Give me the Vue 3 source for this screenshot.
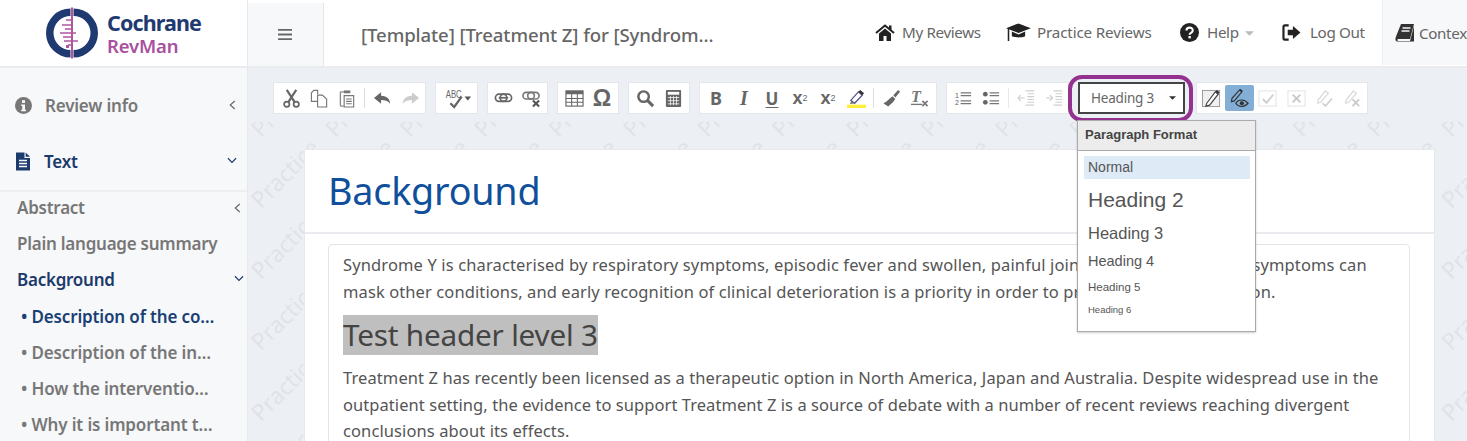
<script setup>
const sideSubs = [
  { t: 'Description of the co…', on: true },
  { t: 'Description of the in…', on: false },
  { t: 'How the interventio…', on: false },
  { t: 'Why it is important t…', on: false }
]
</script>

<template>
  <div class="app">
    <aside class="side">
      <div class="logo">
        <svg class="mark" viewBox="0 0 52 52" width="52" height="52">
          <path d="M24.5 1.5A24.5 24.5 0 0 0 24.5 50.5V43A17 17 0 0 1 24.5 9Z" fill="#1f3a70"/>
          <path d="M27.5 1.5A24.5 24.5 0 0 1 27.5 50.5V43A17 17 0 0 0 27.5 9Z" fill="#1f3a70"/>
          <rect x="25" y="0.5" width="2" height="51" fill="#b0569f"/>
          <path d="M20 13h6M16 18h10M19 22h7M14 26h16M17 30h9M18 34h14M22 38h4" stroke="#b0569f" stroke-width="1.4" fill="none"/>
          <rect x="20" y="38" width="3" height="3" fill="#b0569f"/>
        </svg>
        <div class="brand">
          <div class="b1">Cochrane</div>
          <div class="b2">RevMan</div>
        </div>
      </div>
      <div class="menu-row grey first">
        <svg class="mi" viewBox="0 0 16 16" width="17" height="17"><circle cx="8" cy="8" r="8" fill="#777"/><rect x="6.6" y="3" width="2.8" height="2.6" fill="#f7f8fa"/><path d="M5.8 7h3.6v5h1v1.5H5.8V12h1V8.4h-1Z" fill="#f7f8fa"/></svg>
        <span>Review info</span>
        <svg class="chev" viewBox="0 0 10 12" width="9" height="12"><path d="M7.5 1.5 2.5 6l5 4.500" fill="none" stroke="#666" stroke-width="1.3"/></svg>
      </div>
      <div class="menu-row navy second">
        <svg class="mi" viewBox="0 0 16 18" width="16" height="19"><path d="M1 0h8.500v5.500H15V18H1Z" fill="#1c3a6b"/><path d="M10.700 0 15 4.300h-4.300Z" fill="#1c3a6b"/><path d="M4 8h8M4 11h8M4 14h8" stroke="#f7f8fa" stroke-width="1.400"/></svg>
        <span>Text</span>
        <svg class="chev down" viewBox="0 0 12 10" width="12" height="9"><path d="M1.500 2.500 6 7l4.500-4.500" fill="none" stroke="#1c3a6b" stroke-width="1.300"/></svg>
      </div>
      <div class="tree">
        <div class="tree-row grey">Abstract
          <svg class="tchev" viewBox="0 0 10 12" width="9" height="12"><path d="M7.500 1.500 2.500 6l5 4.500" fill="none" stroke="#666" stroke-width="1.300"/></svg>
        </div>
        <div class="tree-row grey">Plain language summary</div>
        <div class="tree-row navy">Background
          <svg class="tchev" viewBox="0 0 12 10" width="12" height="9"><path d="M1.500 2.500 6 7l4.500-4.500" fill="none" stroke="#1c3a6b" stroke-width="1.300"/></svg>
        </div>
        <div v-for="s in sideSubs" :key="s.t" class="tree-row sub" :class="s.on ? 'navy2' : 'grey'">• {{ s.t }}</div>
      </div>
    </aside>

    <div class="right">
      <header class="top">
        <div class="burger">
          <svg viewBox="0 0 16 14" width="15" height="13"><path d="M0 2h15M0 7h15M0 12h15" stroke="#666" stroke-width="2"/></svg>
        </div>
        <div class="title">[Template] [Treatment Z] for [Syndrom…</div>
        <nav class="nav">
          <a class="n1">
            <svg viewBox="0 0 20 17" width="20" height="17"><path d="M4 9.500 10 4.500l6 5V17h-4.500v-5h-3v5H4Z" fill="#222"/><path d="M1 9 10 1.500 19 9" fill="none" stroke="#222" stroke-width="2"/><rect x="14" y="1.500" width="2.500" height="4.500" fill="#222"/></svg>
            My Reviews
          </a>
          <a class="n2">
            <svg viewBox="0 0 26 21" width="25" height="20"><path d="M13 1.500 26 6.500 13 11.500 0 6.500Z" fill="#222"/><path d="M6 10v4.500c0 2.300 14 2.300 14 0V10l-7 3Z" fill="#222"/><path d="M2.500 7v13" stroke="#222" stroke-width="1.600"/></svg>
            Practice Reviews
          </a>
          <a class="n3">
            <svg viewBox="0 0 20 20" width="19" height="19"><circle cx="10" cy="10" r="10" fill="#222"/><path d="M6.800 8c0-4.200 6.600-4.200 6.600-.2 0 2.500-3.300 2.500-3.300 4.500" fill="none" stroke="#fff" stroke-width="2.200"/><rect x="8.900" y="13.700" width="2.500" height="2.500" fill="#fff"/></svg>
            Help
            <svg class="caret" viewBox="0 0 10 5" width="9" height="5"><path d="M0 0h10L5 5Z" fill="#bbb"/></svg>
          </a>
          <a class="n4">
            <svg viewBox="0 0 20 18" width="19" height="17"><path d="M7 1.500H3C1.800 1.500 1.500 2.300 1.500 3v12c0 .8.400 1.500 1.500 1.500h4" fill="none" stroke="#222" stroke-width="2.300"/><path d="M11.500 2 19.500 9l-8 7v-4H6V6h5.500Z" fill="#222"/></svg>
            Log Out
          </a>
          <a class="n5">
            <svg viewBox="0 0 20 20" width="20" height="20"><path d="M6 1h13l-4 15H3.500c-1.500 0-1.500 2 0 2H15l4-15v15.500H3C.5 18.500 0 16.500.8 14Z" fill="#333"/><path d="M7.500 5h8M6.500 8h8" stroke="#f7f8fa" stroke-width="1.300"/></svg>
            Context and evidence
          </a>
        </nav>
      </header>

      <main class="main">
        <svg class="mark-layer" width="1219" height="373" aria-hidden="true">
          <defs>
            <pattern id="wm" x="0" y="1" width="74.400" height="71" patternUnits="userSpaceOnUse">
              <text transform="translate(13 69.500) rotate(-45)" class="wm-text">Practice</text>
            </pattern>
          </defs>
          <rect width="1219" height="373" fill="url(#wm)"/>
        </svg>

        <div class="bar">
          <div class="grp g1">
            <button class="tb"><svg viewBox="0 0 20 20"><circle cx="5" cy="16" r="2.800" fill="none" stroke="#666" stroke-width="1.800"/><circle cx="15" cy="16" r="2.800" fill="none" stroke="#666" stroke-width="1.800"/><path d="M6.500 14 15 1M13.500 14 5 1" stroke="#666" stroke-width="2.300"/></svg></button>
            <button class="tb"><svg viewBox="0 0 20 20"><path d="M8 5.500 8 1.500H4L1.500 4v9H8" fill="none" stroke="#777" stroke-width="1.200"/><path d="M8 6.500h5l4.500 4V19H8Z" fill="#fff" stroke="#777" stroke-width="1.200"/></svg></button>
            <button class="tb"><svg viewBox="0 0 20 20"><path d="M6 3H3.500Q2.500 3 2.500 4v13q0 1 1 1H6" fill="none" stroke="#888" stroke-width="1.400"/><path d="M6 1.500h7v3H6Z" fill="#777"/><path d="M6.500 7h10v12h-10Z" fill="#fff" stroke="#777" stroke-width="1.200"/><path d="M8.500 10.500h6M8.500 13h6M8.500 15.500h6" stroke="#777" stroke-width="1.200"/></svg></button>
            <i class="sep"></i>
            <button class="tb"><svg viewBox="0 0 20 20"><path d="M8.500 3.500 1 9.500l7.500 6v-3.800c4 0 7 .6 9.500 3.800 0-5-3-8-9.500-8.500Z" fill="#666"/></svg></button>
            <button class="tb"><svg viewBox="0 0 20 20"><path d="M11.500 3.500 19 9.500l-7.500 6v-3.800c-4 0-7 .6-9.500 3.800 0-5 3-8 9.500-8.500Z" fill="#ccc"/></svg></button>
          </div>
          <div class="grp g2">
            <button class="tb wide">
              <svg viewBox="0 0 34 24" class="wide-svg"><text transform="translate(5 11) scale(.75 1)" class="abc">ABC</text><path d="M10 17 14 21 22 10" fill="none" stroke="#666" stroke-width="2.400"/><path d="M25 10h7l-3.500 4Z" fill="#555"/></svg>
            </button>
          </div>
          <div class="grp g3">
            <button class="tb"><svg viewBox="0 0 20 20"><rect x="1.500" y="5.500" width="12" height="7.500" rx="3.700" fill="none" stroke="#666" stroke-width="1.800"/><rect x="6.500" y="5.500" width="12" height="7.500" rx="3.700" fill="none" stroke="#666" stroke-width="1.800"/><path d="M5 9.250h10" stroke="#666" stroke-width="1.800"/></svg></button>
            <button class="tb"><svg viewBox="0 0 20 20"><rect x="1" y="3.500" width="12" height="7" rx="3.500" fill="none" stroke="#777" stroke-width="1.700"/><rect x="6" y="3.500" width="12" height="7" rx="3.500" fill="none" stroke="#777" stroke-width="1.700"/><path d="M11.500 12l6.500 6.500M18 12l-6.500 6.500" stroke="#555" stroke-width="2.200"/></svg></button>
          </div>
          <div class="grp g4">
            <button class="tb"><svg viewBox="0 0 20 20"><rect x="1" y="2" width="18" height="16" fill="#fff" stroke="#666" stroke-width="1.200"/><rect x="1" y="2" width="18" height="3.500" fill="#666"/><path d="M1 10h18M1 14h18M7 5v13M13 5v13" stroke="#666" stroke-width="1.100"/></svg></button>
            <button class="tb glyph omega">Ω</button>
          </div>
          <div class="grp g5">
            <button class="tb"><svg viewBox="0 0 20 20"><circle cx="8" cy="8" r="5.500" fill="none" stroke="#666" stroke-width="2.600"/><path d="M12 12l6 6" stroke="#666" stroke-width="3.200"/></svg></button>
            <button class="tb"><svg viewBox="0 0 20 20"><rect x="2" y="1" width="16" height="18" rx="1" fill="#666"/><rect x="4" y="3" width="12" height="3" fill="#fff"/><path d="M4 9h12M4 12.300h12M4 15.600h12" stroke="#fff" stroke-width=".8" fill="none"/><path d="M6.800 7.500v9.500M10 7.500v9.500M13.200 7.500v9.500" stroke="#fff" stroke-width=".8"/></svg></button>
          </div>
          <div class="grp g6">
            <button class="tb glyph fb">B</button>
            <button class="tb glyph fi">I</button>
            <button class="tb glyph fu">U</button>
            <button class="tb glyph fx">x<sub>2</sub></button>
            <button class="tb glyph fx">x<sup>2</sup></button>
            <button class="tb"><svg viewBox="0 0 20 20"><path d="M4 12 12 3l4 3.500-8 8.500Z" fill="#fff" stroke="#5a5a8a" stroke-width="1.400"/><path d="M12 3l2-2 4 3.500-2 2Z" fill="#333"/><path d="M4.500 12.500 8 15l-5 1Z" fill="#777"/><rect x="0" y="16.500" width="20" height="3.500" fill="#ffef3a"/></svg></button>
            <i class="sep"></i>
            <button class="tb"><svg viewBox="0 0 20 20"><path d="M12 6.500 17 1l2 2-5 6Z" fill="#666"/><path d="M11 7.500 14 10.500 11.500 14l-5 4.500-5-3.500c3.500-1.500 6-5 9.500-7.500Z" fill="#666"/></svg></button>
            <button class="tb"><svg viewBox="0 0 20 20"><text x="1" y="14" class="tx">T</text><rect x="1" y="15.500" width="12" height="1.400" fill="#777"/><path d="M13 12.500l5.500 5.500M18.500 12.500 13 18" stroke="#777" stroke-width="1.700"/></svg></button>
          </div>
          <div class="grp g7">
            <button class="tb"><svg viewBox="0 0 20 20"><text x="1" y="9" class="num">1</text><text x="1" y="17" class="num">2</text><path d="M7 4h11M7 7h11M7 12.500h11M7 15.500h11" stroke="#777" stroke-width="1.300"/></svg></button>
            <button class="tb"><svg viewBox="0 0 20 20"><circle cx="3.500" cy="5.500" r="2.500" fill="#666"/><circle cx="3.500" cy="14" r="2.500" fill="#666"/><path d="M8 4h10M8 7h10M8 12.500h10M8 15.500h10" stroke="#777" stroke-width="1.300"/></svg></button>
            <i class="sep pale"></i>
            <button class="tb"><svg viewBox="0 0 20 20"><path d="M9 2h9M11 5h7M11 8h7M11 11h7M11 14h7M9 17h9" stroke="#cfcfcf" stroke-width="1.200"/><path d="M1 9.500h7M4 6.500 1 9.500l3 3" fill="none" stroke="#cfcfcf" stroke-width="1.200"/></svg></button>
            <button class="tb"><svg viewBox="0 0 20 20"><path d="M9 2h9M11 5h7M11 8h7M11 11h7M11 14h7M9 17h9" stroke="#cfcfcf" stroke-width="1.200"/><path d="M1 9.500h7M5 6.500l3 3-3 3" fill="none" stroke="#cfcfcf" stroke-width="1.200"/></svg></button>
          </div>
          <div class="combo">
            <span>Heading 3</span>
            <svg viewBox="0 0 10 5" width="7" height="4"><path d="M0 0h10L5 5Z" fill="#333"/></svg>
          </div>
          <div class="grp g8">
            <button class="tc"><svg viewBox="0 0 20 20"><rect x=".5" y="1.500" width="18" height="17" fill="#f0f0f0" stroke="#999"/><path d="M5 15 14 3l3 2.500L8 17l-4 1Z" fill="#fff" stroke="#444" stroke-width="1.200"/><path d="M14 3l1.500-2 3 2.500-1.500 2Z" fill="#333"/></svg></button>
            <button class="tc active"><svg viewBox="0 0 20 20"><path d="M2 10 10 1l2.500 2-8 9.500-3 .8Z" fill="#83aed6" stroke="#333" stroke-width="1.200"/><path d="M10 1l1-1 2.500 2-1 1Z" fill="#222"/><path d="M6 15c3-4.500 9-4.500 13 0-4 4.500-10 4.500-13 0Z" fill="#83aed6" stroke="#333" stroke-width="1.200"/><circle cx="12.500" cy="15" r="2.200" fill="#333"/></svg></button>
            <button class="tc"><svg viewBox="0 0 20 20"><rect x="1" y="2" width="18" height="16" fill="none" stroke="#e2e2e2"/><path d="M5 10.500 9 14.500 16 6" fill="none" stroke="#cfcfcf" stroke-width="2"/></svg></button>
            <button class="tc"><svg viewBox="0 0 20 20"><rect x="1" y="2" width="18" height="16" fill="none" stroke="#e2e2e2"/><path d="M6 6l8 8M14 6l-8 8" stroke="#c9c9c9" stroke-width="2"/></svg></button>
            <button class="tc"><svg viewBox="0 0 20 20"><path d="M3 12 11 2l3 2.500L6 14l-3 1Z" fill="none" stroke="#d6d6d6" stroke-width="1.200"/><path d="M8 15l3 3 7-8" fill="none" stroke="#cfcfcf" stroke-width="1.800"/></svg></button>
            <button class="tc"><svg viewBox="0 0 20 20"><path d="M3 12 11 2l3 2.500L6 14l-3 1Z" fill="none" stroke="#d6d6d6" stroke-width="1.200"/><path d="M10 11l7 7M17 11l-7 7" stroke="#c9c9c9" stroke-width="1.800"/></svg></button>
          </div>
        </div>

        <section class="card">
          <h1 class="h">Background</h1>
          <div class="body">
            <div class="editor">
              <p class="ln l1">Syndrome Y is characterised by respiratory symptoms, episodic fever and swollen, painful joints. These non-specific symptoms can</p>
              <p class="ln l2">mask other conditions, and early recognition of clinical deterioration is a priority in order to prevent organ dysfunction.</p>
              <h3 class="h3"><span>Test header level 3</span></h3>
              <p class="ln l3">Treatment Z has recently been licensed as a therapeutic option in North America, Japan and Australia. Despite widespread use in the</p>
              <p class="ln l4">outpatient setting, the evidence to support Treatment Z is a source of debate with a number of recent reviews reaching divergent</p>
              <p class="ln l5">conclusions about its effects.</p>
            </div>
          </div>
        </section>

        <div class="ring"></div>
        <div class="drop">
          <div class="drop-h">Paragraph Format</div>
          <div class="drop-list">
            <div class="it normal">Normal</div>
            <div class="it i2">Heading 2</div>
            <div class="it i3">Heading 3</div>
            <div class="it i4">Heading 4</div>
            <div class="it i5">Heading 5</div>
            <div class="it i6">Heading 6</div>
          </div>
        </div>
      </main>
    </div>
  </div>
</template>

<style>
html, body { margin: 0; padding: 0; background: #fff; }
</style>

<style scoped>
.app {
  width: 1467px; height: 441px; overflow: hidden; display: flex;
  font-family: "Noto Sans", "Open Sans", sans-serif; color: #555;
}
.side { width: 247px; flex: none; background: #f7f8fa; }
.logo {
  height: 68px; box-sizing: border-box; background: #fff; border-bottom: 2px solid #e9ebee;
  display: flex; align-items: center; padding-left: 46px; gap: 9px;
}
.mark { margin-top: -1px; }
.brand { line-height: 1; margin-top: 2px; }
.b1 { font-size: 21.500px; font-weight: 700; color: #1f3a70; letter-spacing: -.9px; line-height: 24px; }
.b2 { font-size: 18.500px; font-weight: 600; color: #a8509f; line-height: 22px; letter-spacing: -.15px; }
.menu-row {
  display: flex; align-items: center; height: 56px; padding-left: 15px; font-size: 17px; font-weight: 600;
  letter-spacing: -.2px; position: relative;
}
.menu-row .mi { flex: none; margin-right: 13px; }
.menu-row.first { margin-top: 9px; }
.chev { position: absolute; left: 228px; top: 22px; }
.chev.down { top: 23px; left: 226px; }
.grey { color: #777; }
.navy { color: #1c3a6b; }
.navy2 { color: #1a3f74; }
.tree { border-top: 2px solid #eceef1; margin-top: 1px; padding-top: 0; }
.tree-row {
  height: 36.200px; line-height: 31px; padding-left: 17px; font-size: 17px; font-weight: 600;
  letter-spacing: -.25px; position: relative; white-space: nowrap;
}
.tree-row.sub { padding-left: 21px; letter-spacing: -.15px; }
.tchev { position: absolute; left: 233px; top: 10px; }

.right { flex: 1; min-width: 0; display: flex; flex-direction: column; border-left: 1px solid #e6e8ec; }
.top { height: 68px; flex: none; box-sizing: border-box; display: flex; background: #fff; border-bottom: 2px solid #e9ebee; padding-top: 3px; }
.burger {
  width: 76px; flex: none; background: #f7f8fa; border-right: 1px solid #e3e5e9; display: flex; align-items: center; justify-content: center; box-sizing: border-box;
}
.title { width: 551px; flex: none; padding-left: 37px; box-sizing: border-box; font-size: 18.600px; line-height: 64px; color: #666; letter-spacing: -.1px; white-space: nowrap; font-weight: 500; }
.nav { display: flex; flex: 1; font-size: 15.200px; color: #666; letter-spacing: -.35px; min-width: 0; }
.nav a { display: flex; align-items: center; white-space: nowrap; height: 60px; margin-top: -1px; box-sizing: border-box; flex: none; }
.nav svg { flex: none; margin-right: 7px; }
.n1 { width: 131px; }
.n2 { width: 174px; letter-spacing: -.15px; }
.n2 svg { margin-right: 6px; }
.n3 { width: 102px; }
.n3 svg { margin-right: 8px; }
.n3 .caret { margin: 2px 0 0 6px; }
.n4 { width: 100px; }
.n4 svg { margin-right: 9px; }
.n5 { background: #f7f8fa; padding-left: 12px; height: 65px !important; border-left: 1px solid #eceef1; margin-top: -3px !important; }
.n5 svg { margin-right: 4px; }

.main { flex: 1; background: #eceff4; position: relative; min-height: 0; }
.mark-layer { position: absolute; left: 0; top: 0; }
.wm-text { font-family: "Noto Sans", sans-serif; font-size: 23px; fill: #dfe2e7; }
.bar {
  position: relative; display: flex; gap: 9px; height: 54px; box-sizing: border-box; padding: 14px 0 0 25px; background: #eceff4;
}
.grp, .combo {
  height: 32px; box-sizing: border-box; background: #fff; border: 1px solid #e4e6ea; display: flex; align-items: center;
}
.g1 { width: 153px; padding-left: 3px; }
.g2 { width: 43px; justify-content: center; }
.g3 { width: 61px; justify-content: center; }
.g4, .g5 { width: 62px; justify-content: center; }
.g6 { width: 238px; padding-left: 2px; }
.g7 { width: 123px; padding-left: 2px; }
.g8 { width: 172px; margin-left: 2px; }
.tb, .tc {
  appearance: none; border: 0; background: none; padding: 0; margin: 0; width: 28px; height: 28px; flex: none;
  display: flex; align-items: center; justify-content: center; font-family: inherit; color: #666;
}
.tb svg { width: 19px; height: 19px; }
.tb.wide { width: 36px; }
.tb .wide-svg { width: 32px; height: 23px; }
.abc { font: 11px "Liberation Sans", sans-serif; fill: #666; }
.tx { font: italic 700 17px "Liberation Serif", serif; fill: #777; }
.num { font: 7.500px "Liberation Sans", sans-serif; fill: #666; }
.sep { width: 1px; height: 20px; background: #ddd; margin: 0 3px; flex: none; }
.sep.pale { background: #e9e9e9; }
.glyph { font-family: "Liberation Sans", sans-serif; }
.omega { font-size: 23px; font-weight: 700; }
.fb { font-weight: 700; font-size: 18px; font-family: "Noto Sans", sans-serif; }
.fi { font-style: italic; font-weight: 700; font-size: 20px; font-family: "Liberation Serif", serif; }
.fu { font-weight: 700; font-size: 17px; text-decoration: underline; text-underline-offset: 2px; font-family: "Noto Sans", sans-serif; }
.fx { font-weight: 700; font-size: 18px; }
.fx sub, .fx sup { font-size: 9px; font-weight: 400; line-height: 0; }
.combo {
  width: 107px; height: 32px; border: 2px solid #444; margin: 0; padding: 0 7px 0 11px; justify-content: space-between;
  font-size: 13.500px; color: #666; letter-spacing: -.2px;
}
.tc { width: 28.300px; height: 26px; border-radius: 2px; }
.tc svg { width: 19px; height: 19px; }
.tc.active { background: #83aed6; }

.card {
  position: relative; margin: 27px 0 0 56px; width: 1131px; height: 400px; background: #fff; border: 1px solid #e6e8ec; box-sizing: border-box;
}
.h {
  margin: 0; height: 84px; box-sizing: border-box; border-bottom: 2px solid #e9ebee; padding-left: 23px;
  font-size: 37.700px; line-height: 82px; font-weight: 400; color: #0f4f9b; letter-spacing: -.2px;
}
.body { padding: 10px 24px 0 23px; }
.editor { border: 1px solid #e2e4e7; border-radius: 4px; height: 300px; padding: 7px 14px; box-sizing: border-box; }
.ln { margin: 0; font-size: 16.500px; line-height: 26.500px; white-space: nowrap; color: #555; letter-spacing: .1px; }
.l1 { letter-spacing: .13px; }
.l4 { letter-spacing: .06px; }
.h3 { margin: 10px 0 10px; font-size: 29.700px; font-weight: 400; line-height: 40px; height: 40px; color: #444; }
.h3 span { background: #bfbfbf; display: inline-block; letter-spacing: -.2px; }

.ring {
  position: absolute; left: 820px; top: 7px; width: 125px; height: 47px; box-sizing: border-box;
  border: 4px solid #93338f; border-radius: 14px;
}
.drop {
  position: absolute; left: 829px; top: 52px; width: 179px; height: 212px; box-sizing: border-box; background: #fff; border: 1px solid #aaa;
  box-shadow: 0 1px 2px rgba(0,0,0,.2); font-family: "Liberation Sans", sans-serif; color: #555;
}
.drop-h { height: 30px; box-sizing: border-box; background: #ececec; border-bottom: 1px solid #aaa; padding-left: 7px; font-size: 13px; font-weight: 700; line-height: 28px; color: #444; }
.drop-list { padding: 5px 5px 0 6px; }
.it { padding-left: 4px; white-space: nowrap; }
.normal { height: 23px; line-height: 23px; background: #deeaf5; font-size: 14px; color: #555; }
.i2 { font-size: 21px; height: 41px; line-height: 41px; }
.i3 { font-size: 16.500px; height: 27px; line-height: 27px; }
.i4 { font-size: 14.500px; height: 29px; line-height: 29px; }
.i5 { font-size: 11.500px; height: 23px; line-height: 23px; }
.i6 { font-size: 9.500px; height: 22px; line-height: 22px; }
</style>
